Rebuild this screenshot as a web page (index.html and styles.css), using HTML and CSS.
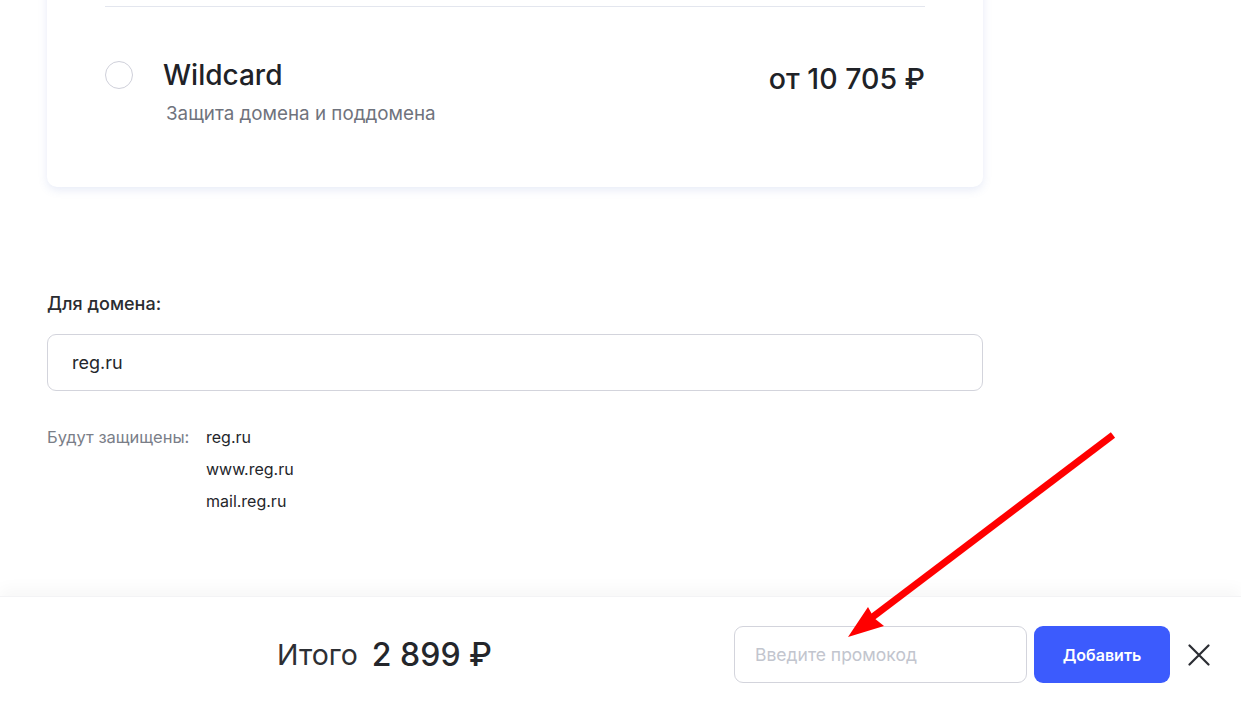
FILE: index.html
```html
<!DOCTYPE html>
<html>
<head>
  <meta charset="utf-8">
  <link rel="stylesheet" href="styles.css">
</head>
<body>
  <div class="page">
    <div class="main-content">
      <div class="cert-card">
        <div class="cert-divider"></div>
        <label class="cert-option">
          <span class="radio"></span>
          <span class="cert-info">
            <span class="cert-title">Wildcard</span>
            <span class="cert-desc">Защита домена и поддомена</span>
          </span>
          <span class="cert-price">от 10 705 ₽</span>
        </label>
      </div>

      <div class="domain-block">
        <div class="field-label">Для домена:</div>
        <div class="text-input">reg.ru</div>

        <div class="protected">
          <div class="protected-label">Будут защищены:</div>
          <ul class="protected-list">
            <li>reg.ru</li>
            <li>www.reg.ru</li>
            <li>mail.reg.ru</li>
          </ul>
        </div>
      </div>
    </div>

    <div class="footer">
      <div class="total">
        <span class="total-label">Итого</span>
        <span class="total-sum">2 899 ₽</span>
      </div>
      <div class="promo">
        <div class="promo-input">Введите промокод</div>
        <button class="promo-button">Добавить</button>
        <button class="close-button" aria-label="Закрыть">
          <svg width="22" height="22" viewBox="0 0 22 22">
            <path d="M1.5 1.5 L20.5 20.5 M20.5 1.5 L1.5 20.5" stroke="#2b2d33" stroke-width="2.2" stroke-linecap="round" fill="none"/>
          </svg>
        </button>
      </div>
    </div>
  </div>

  <!-- annotation arrow -->
  <svg class="annotation" width="1241" height="708" viewBox="0 0 1241 708">
    <line x1="1113" y1="435" x2="866" y2="622" stroke="#ff0000" stroke-width="7"/>
    <polygon points="848,637 868,607 874,618 884,626" fill="#ff0000"/>
  </svg>
</body>
</html>
```

FILE: styles.css
```css
* {
  box-sizing: border-box;
}

html, body {
  margin: 0;
  padding: 0;
  height: 100%;
}

body {
  font-family: Inter, 'Noto Sans', sans-serif;
  color: #24262b;
  background: #fff;
  overflow: hidden;
}

.page {
  display: flex;
  flex-direction: column;
  height: 100vh;
}

.main-content {
  flex: 1;
  padding: 0 258px 0 47px;
  overflow: hidden;
}

.cert-card {
  margin-top: -20px;
  padding: 26px 58px 61px;
  background: #fff;
  border-radius: 10px;
  box-shadow: 0 3px 10px rgba(70, 100, 190, 0.13);
}

.cert-divider {
  height: 1px;
  background: #e3e6ee;
}

.cert-option {
  display: flex;
  align-items: flex-start;
  padding-top: 53px;
}

.radio {
  flex: none;
  width: 28px;
  height: 28px;
  margin-top: 1px;
  border: 1px solid #cfd0da;
  border-radius: 50%;
  background: #fff;
}

.cert-info {
  display: flex;
  flex-direction: column;
  margin-left: 30px;
  flex: 1;
}

.cert-title {
  font-size: 28px;
  font-weight: 500;
  line-height: 31px;
  color: #202227;
}

.cert-desc {
  margin-top: 11px;
  margin-left: 3px;
  font-size: 18.8px;
  line-height: 24px;
  color: #6f737d;
}

.cert-price {
  font-size: 28.5px;
  font-weight: 500;
  line-height: 31px;
  margin-top: 3px;
  color: #202227;
}

.domain-block {
  padding-top: 106px;
}

.field-label {
  font-size: 18px;
  font-weight: 500;
  line-height: 22px;
  color: #2a2c31;
}

.text-input {
  margin-top: 19px;
  height: 57px;
  display: flex;
  align-items: center;
  padding: 0 24px;
  border: 1px solid #d3d4dc;
  border-radius: 9px;
  font-size: 18px;
  color: #24262b;
}

.protected {
  display: flex;
  margin-top: 30px;
  font-size: 16px;
  line-height: 32px;
}

.protected-label {
  width: 159px;
  font-size: 16.5px;
  color: #7a7e88;
}

.protected-list {
  list-style: none;
  margin: 0;
  padding: 0;
  color: #24262b;
}

.footer {
  flex: none;
  height: 112px;
  display: flex;
  align-items: flex-start;
  padding: 29px 31px 0 277px;
  background: #fff;
  box-shadow: 0 -8px 14px rgba(0, 0, 0, 0.03);
  border-top: 1px solid #f3f3f5;
}

.total {
  display: flex;
  height: 57px;
  align-items: center;
  gap: 14px;
}

.total-label {
  font-size: 28.5px;
  color: #2d2f34;
}

.total-sum {
  font-size: 32px;
  font-weight: 500;
  color: #24262b;
}

.promo {
  display: flex;
  align-items: center;
  margin-left: auto;
}

.promo-input {
  width: 293px;
  height: 57px;
  display: flex;
  align-items: center;
  padding: 0 20px;
  border: 1px solid #d3d4dc;
  border-radius: 9px;
  font-size: 17.5px;
  color: #c2c5ce;
}

.promo-button {
  margin-left: 7px;
  width: 136px;
  height: 57px;
  border: none;
  border-radius: 9px;
  background: #3c5bfd;
  color: #fff;
  font-family: inherit;
  font-size: 16px;
  font-weight: 600;
  cursor: pointer;
}

.close-button {
  margin-left: 18px;
  padding: 0;
  width: 22px;
  height: 22px;
  border: none;
  background: none;
  cursor: pointer;
  display: flex;
}

.annotation {
  position: absolute;
  top: 0;
  left: 0;
  pointer-events: none;
}
```
